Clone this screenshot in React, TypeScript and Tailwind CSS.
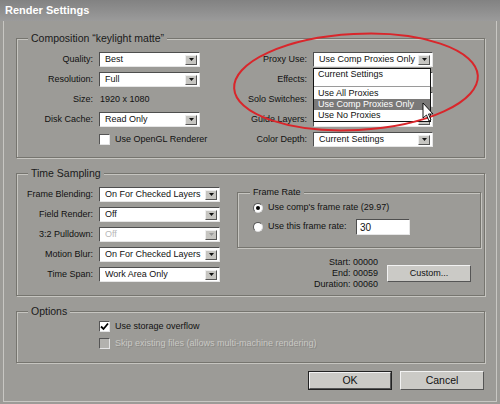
import React from 'react';

function Arrow({ disabled }: { disabled?: boolean }) {
  return (
    <span className="w-[12px] h-[10px] bg-[#c6c5c1] border border-t-[#eeeeee] border-l-[#eeeeee] border-r-[#555555] border-b-[#555555] flex items-center justify-center">
      <svg width="5" height="3" viewBox="0 0 5 3">
        <path d="M0 0H5L2.5 3Z" fill={disabled ? '#9a9a9a' : '#111'} />
      </svg>
    </span>
  );
}

function Select({ value, w, disabled }: { value: string; w: string; disabled?: boolean }) {
  return (
    <div
      className={`${w} h-[15px] bg-white border border-t-[#4e4e4e] border-l-[#4e4e4e] border-r-[#e6e6e6] border-b-[#e6e6e6] flex items-center pl-[5px] pr-[2px]`}
    >
      <span className={`flex-1 truncate leading-none ${disabled ? 'text-[#b9b9b9]' : 'text-[#111]'}`}>{value}</span>
      <Arrow disabled={disabled} />
    </div>
  );
}

function Row({ label, children, lw }: { label: string; children: React.ReactNode; lw: string }) {
  return (
    <div className="flex items-center h-[15px]">
      <span className={`${lw} text-right pr-[6px] shrink-0`}>{label}</span>
      {children}
    </div>
  );
}

function Check({ checked, disabled }: { checked?: boolean; disabled?: boolean }) {
  return (
    <span
      className={`w-[11px] h-[11px] border border-t-[#555] border-l-[#555] border-r-[#e4e4e4] border-b-[#e4e4e4] flex items-center justify-center ${
        disabled ? 'bg-[#b3b2ae]' : 'bg-white'
      }`}
    >
      {checked && (
        <svg width="9" height="9" viewBox="0 0 9 9">
          <path d="M1 4.5L3.5 7L8 1.5" stroke="#000" strokeWidth="1.8" fill="none" />
        </svg>
      )}
    </span>
  );
}

function Radio({ on }: { on?: boolean }) {
  return (
    <span className="w-[10px] h-[10px] rounded-full bg-white border border-t-[#555] border-l-[#555] border-r-[#dcdcdc] border-b-[#dcdcdc] flex items-center justify-center">
      {on && <span className="w-[4px] h-[4px] rounded-full bg-black" />}
    </span>
  );
}

function Group({ title, big, className, children }: { title: string; big?: boolean; className: string; children: React.ReactNode }) {
  return (
    <div className={`border border-[#76756f] shadow-[1px_1px_0_#c6c5c0,inset_1px_1px_0_#c6c5c0] ${className}`}>
      <div className={`-mt-[7px] flex ${big ? 'pl-[11px]' : 'pl-[12px]'}`}>
        <span className={`bg-[#9c9b97] px-[3px] leading-[12px] ${big ? 'text-[10.5px] text-[#1a1a1a]' : 'text-[9px]'}`}>{title}</span>
      </div>
      {children}
    </div>
  );
}

function Button({ children, def, w }: { children: React.ReactNode; def?: boolean; w: string }) {
  return (
    <div className={`${w} ${def ? 'border border-[#222]' : ''}`}>
      <div className="h-full bg-[#cbcac6] border border-t-[#f2f2f2] border-l-[#f2f2f2] border-r-[#555] border-b-[#555] flex items-center justify-center">
        {children}
      </div>
    </div>
  );
}

export default function App() {
  return (
    <div className="w-[500px] h-[404px] bg-[#9c9b97] flex flex-col relative overflow-hidden font-['Liberation_Sans',Arial,sans-serif] text-[9px] text-[#111]">
      <div className="h-[21px] shrink-0 bg-gradient-to-b from-[#828282] to-[#9b9b9b] flex items-center pl-[5px] text-white font-bold text-[11px]">
        Render Settings
      </div>

      <div className="flex-1 mx-[3px] mb-[2px] border-l border-r border-b border-[#c8c7c3] pl-[12px] pr-[11px] pt-[17px] flex flex-col">
        {/* Composition */}
        <Group title={'Composition \u201ckeylight matte\u201d'} big className="h-[120px]">
          <div className="flex pt-[8px]">
            <div className="w-[213px] flex flex-col gap-[5px]">
              <Row label="Quality:" lw="w-[82px]">
                <Select value="Best" w="w-[101px]" />
              </Row>
              <Row label="Resolution:" lw="w-[82px]">
                <Select value="Full" w="w-[101px]" />
              </Row>
              <Row label="Size:" lw="w-[82px]">
                <span className="pl-[1px]">1920 x 1080</span>
              </Row>
              <Row label="Disk Cache:" lw="w-[82px]">
                <Select value="Read Only" w="w-[101px]" />
              </Row>
              <div className="flex items-center h-[15px] pl-[82px] gap-[5px]">
                <Check />
                <span>Use OpenGL Renderer</span>
              </div>
            </div>
            <div className="flex flex-col gap-[5px] relative">
              <Row label="Proxy Use:" lw="w-[83px]">
                <Select value="Use Comp Proxies Only" w="w-[120px]" />
              </Row>
              <Row label="Effects:" lw="w-[83px]">
                <Select value="" w="w-[120px]" />
              </Row>
              <Row label="Solo Switches:" lw="w-[83px]">
                <Select value="" w="w-[120px]" />
              </Row>
              <Row label="Guide Layers:" lw="w-[83px]">
                <Select value="" w="w-[120px]" />
              </Row>
              <Row label="Color Depth:" lw="w-[83px]">
                <Select value="Current Settings" w="w-[120px]" />
              </Row>

              {/* open proxy menu */}
              <div className="absolute left-[83px] top-[16px] w-[118px] bg-white border border-[#111] flex flex-col text-[9px]">
                <div className="h-[11px] pl-[4px] leading-[11px]">Current Settings</div>
                <div className="h-[6px]" />
                <div className="h-px bg-[#9a9a9a]" />
                <div className="h-[11px] pl-[4px] leading-[11px] mt-[1px]">Use All Proxies</div>
                <div className="h-[11px] pl-[4px] leading-[11px] bg-[#7a7978] text-white">Use Comp Proxies Only</div>
                <div className="h-[11px] pl-[4px] leading-[11px]">Use No Proxies</div>
              </div>
            </div>
          </div>
        </Group>

        {/* Time Sampling */}
        <Group title="Time Sampling" big className="h-[123px] mt-[15px]">
          <div className="flex">
            <div className="w-[220px] flex flex-col gap-[5px] pt-[8px]">
              <Row label="Frame Blending:" lw="w-[82px]">
                <Select value="On For Checked Layers" w="w-[121px]" />
              </Row>
              <Row label="Field Render:" lw="w-[82px]">
                <Select value="Off" w="w-[121px]" />
              </Row>
              <Row label="3:2 Pulldown:" lw="w-[82px]">
                <Select value="Off" w="w-[121px]" disabled />
              </Row>
              <Row label="Motion Blur:" lw="w-[82px]">
                <Select value="On For Checked Layers" w="w-[121px]" />
              </Row>
              <Row label="Time Span:" lw="w-[82px]">
                <Select value="Work Area Only" w="w-[121px]" />
              </Row>
            </div>
            <div className="flex-1 mr-[3px] pt-[13px] flex flex-col">
              <Group title="Frame Rate" className="h-[56px]">
                <div className="flex flex-col pl-[15px] pt-[4px] gap-[6px]">
                  <div className="flex items-center gap-[5px] h-[12px]">
                    <Radio on />
                    <span>Use comp&apos;s frame rate (29.97)</span>
                  </div>
                  <div className="flex items-center gap-[5px] h-[14px]">
                    <Radio />
                    <span className="w-[83px]">Use this frame rate:</span>
                    <div className="w-[54px] h-[16px] bg-white border border-t-[#4e4e4e] border-l-[#4e4e4e] border-r-[#e6e6e6] border-b-[#e6e6e6] flex items-center pl-[3px] text-[10px]">
                      30
                    </div>
                  </div>
                </div>
              </Group>
              <div className="flex items-center mt-[9px]">
                <div className="w-[141px] text-right leading-[11px]">
                  <div>Start: 00000</div>
                  <div>End: 00059</div>
                  <div>Duration: 00060</div>
                </div>
                <Button w="w-[84px] h-[17px] ml-[9px]">Custom...</Button>
              </div>
            </div>
          </div>
        </Group>

        {/* Options */}
        <Group title="Options" big className="h-[52px] mt-[15px]">
          <div className="flex flex-col pl-[82px] pt-[4px] gap-[6px]">
            <div className="flex items-center gap-[5px] h-[11px]">
              <Check checked />
              <span>Use storage overflow</span>
            </div>
            <div className="flex items-center gap-[5px] h-[11px]">
              <Check disabled />
              <span className="text-[#c9c8c4] [text-shadow:1px_1px_0_#8a8985]">
                Skip existing files (allows multi-machine rendering)
              </span>
            </div>
          </div>
        </Group>

        <div className="flex justify-end gap-[8px] mt-[8px] pr-[1px] text-[10.5px]">
          <Button def w="w-[84px] h-[19px]">OK</Button>
          <Button w="w-[84px] h-[19px]">Cancel</Button>
        </div>
      </div>

      {/* red annotation ellipse */}
      <svg className="absolute left-0 top-0 pointer-events-none" width="500" height="404">
        <ellipse cx="356" cy="82" rx="122" ry="48" fill="none" stroke="#d9262b" strokeWidth="2" transform="rotate(-3 356 82)" />
        <path
          d="M423 103 L423 118 L426.5 115 L429 121 L431 120 L428.5 114 L433 114 Z"
          fill="#fff"
          stroke="#000"
          strokeWidth="0.9"
        />
      </svg>
    </div>
  );
}
